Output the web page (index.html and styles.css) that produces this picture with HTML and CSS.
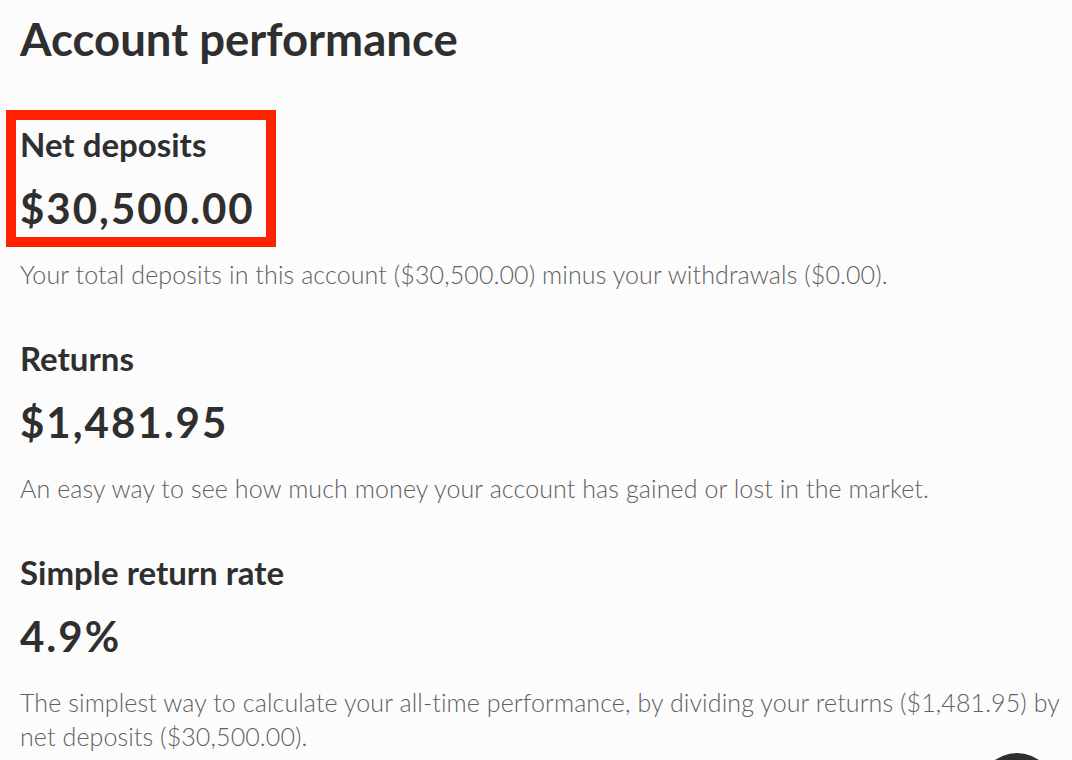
FILE: index.html
```html
<!DOCTYPE html>
<html lang="en">
<head>
<meta charset="utf-8">
<title>Account performance</title>
<link rel="stylesheet" href="styles.css">
</head>
<body>
<main class="page">
  <h1 class="title">Account performance</h1>

  <section class="metric">
    <div class="highlight">
      <h2 class="metric-label">Net deposits</h2>
      <p class="metric-value">$30,500.00</p>
    </div>
    <p class="metric-desc">Your total deposits in this account ($30,500.00) minus your withdrawals ($0.00).</p>
  </section>

  <section class="metric">
    <h2 class="metric-label">Returns</h2>
    <p class="metric-value">$1,481.95</p>
    <p class="metric-desc">An easy way to see how much money your account has gained or lost in the market.</p>
  </section>

  <section class="metric">
    <h2 class="metric-label">Simple return rate</h2>
    <p class="metric-value">4.9%</p>
    <p class="metric-desc">The simplest way to calculate your all-time performance, by dividing your returns ($1,481.95) by net deposits ($30,500.00).</p>
  </section>
</main>
<div class="chat-button" aria-hidden="true"></div>
</body>
</html>
```

FILE: styles.css
```css
html, body {
  margin: 0;
  padding: 0;
}
body {
  background: #fcfcfc;
  color: #2f2f2f;
  font-family: "Lato", "Noto Sans", sans-serif;
  overflow: hidden;
  height: 760px;
}
.page {
  padding: 11px 12px 0 20px;
}
.title {
  margin: 0;
  font-size: 45.5px;
  line-height: 56px;
  font-weight: 700;
  color: #2f2f2f;
}
.metric {
  display: flex;
  flex-direction: column;
  margin-top: 57px;
}
.metric + .metric {
  margin-top: 47px;
}
.highlight {
  display: flex;
  flex-direction: column;
  outline: 10px solid #ff2200;
  outline-offset: 4px;
  align-self: flex-start;
  padding-right: 7px;
}
.metric-label {
  margin: 0;
  font-size: 33px;
  line-height: 40px;
  font-weight: 700;
  color: #2f2f2f;
}
.metric-value {
  margin: 19px 0 0;
  font-size: 42px;
  line-height: 50px;
  font-weight: 700;
  letter-spacing: 2px;
  color: #2f2f2f;
}
.metric-desc {
  margin: 24px 0 0;
  font-size: 25px;
  line-height: 34px;
  font-weight: 300;
  letter-spacing: 0.1px;
  color: #606060;
}
.chat-button {
  position: fixed;
  left: 979px;
  top: 753px;
  width: 76px;
  height: 76px;
  border-radius: 50%;
  background: #2f2f2f;
}
```
